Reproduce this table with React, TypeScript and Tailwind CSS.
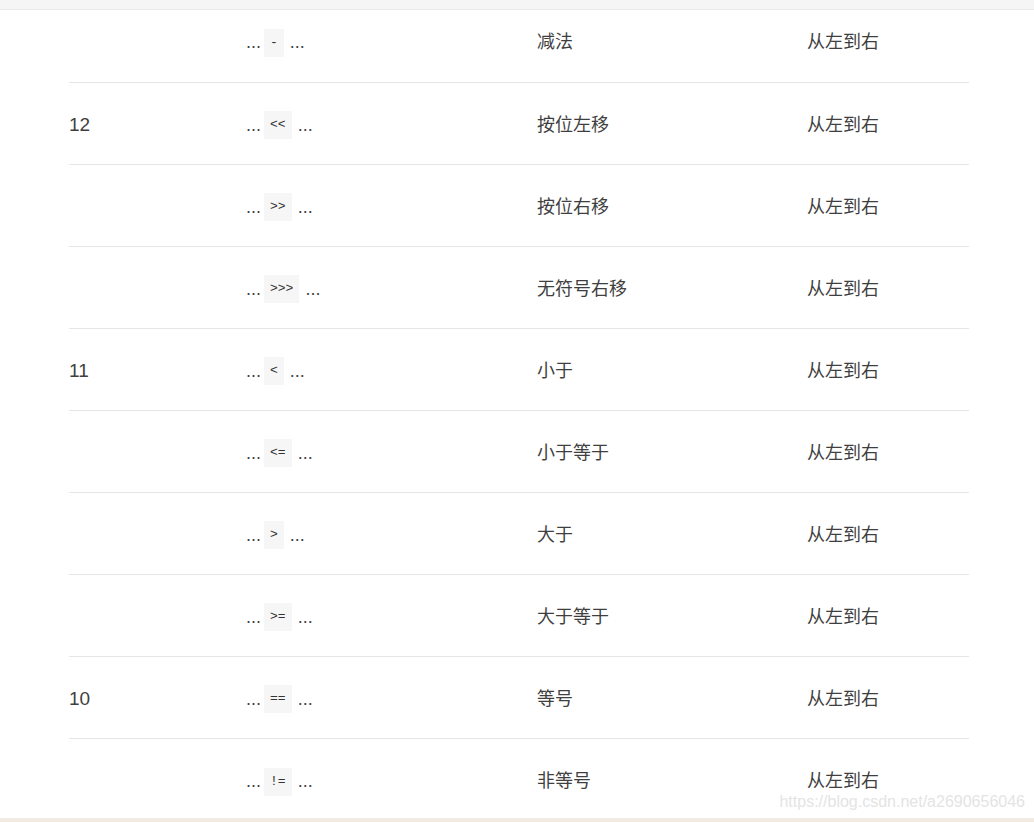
const rows: { level: string; op: string; desc: string }[] = [
  { level: "12", op: "<<", desc: "按位左移" },
  { level: "", op: ">>", desc: "按位右移" },
  { level: "", op: ">>>", desc: "无符号右移" },
  { level: "11", op: "<", desc: "小于" },
  { level: "", op: "<=", desc: "小于等于" },
  { level: "", op: ">", desc: "大于" },
  { level: "", op: ">=", desc: "大于等于" },
  { level: "10", op: "==", desc: "等号" },
  { level: "", op: "!=", desc: "非等号" },
];

function Row({ level, op, desc, first, last }: { level: string; op: string; desc: string; first?: boolean; last?: boolean }) {
  return (
    <div
      className={`flex items-center ${last ? "" : "border-b border-[#e6e6e6]"} ${
        first ? "h-[73px] pb-[7px]" : "h-[82px] pt-[3px]"
      }`}
    >
      <div className="w-[177px] text-[19px]">{level}</div>
      <div className="flex w-[291px] items-center">
        <span className="mr-[3px]">...</span>
        <code className="inline-block h-[28px] bg-[#f6f6f6] px-[6px] font-['Liberation_Mono',monospace] text-[13px] leading-[28px] text-[#333]">
          {op}
        </code>
        <span className="ml-[6px]">...</span>
      </div>
      <div className="w-[270px]">{desc}</div>
      <div className="flex-1">从左到右</div>
    </div>
  );
}

export default function App() {
  return (
    <div className="relative h-[822px] w-[1034px] overflow-hidden bg-white font-['Liberation_Sans','Noto_Sans_CJK_SC',sans-serif] text-[18px] text-[#3f3f3f]">
      {/* top strip */}
      <div className="h-[10px] border-b border-[#e8e8e8] bg-[#f5f5f5]"></div>

      <div className="ml-[69px] w-[900px]">
        <Row level="" op="-" desc="减法" first />
        {rows.map((r, i) => (
          <Row key={i} level={r.level} op={r.op} desc={r.desc} last={i === rows.length - 1} />
        ))}
      </div>

      {/* watermark */}
      <div className="absolute bottom-[11px] right-[9px] font-['Liberation_Sans',sans-serif] text-[16px] leading-[18px] text-[#e4e4e4]">
        https://blog.csdn.net/a2690656046
      </div>

      {/* bottom strip */}
      <div className="absolute bottom-0 left-0 h-[4px] w-full bg-[#f1ebe1]"></div>
    </div>
  );
}
